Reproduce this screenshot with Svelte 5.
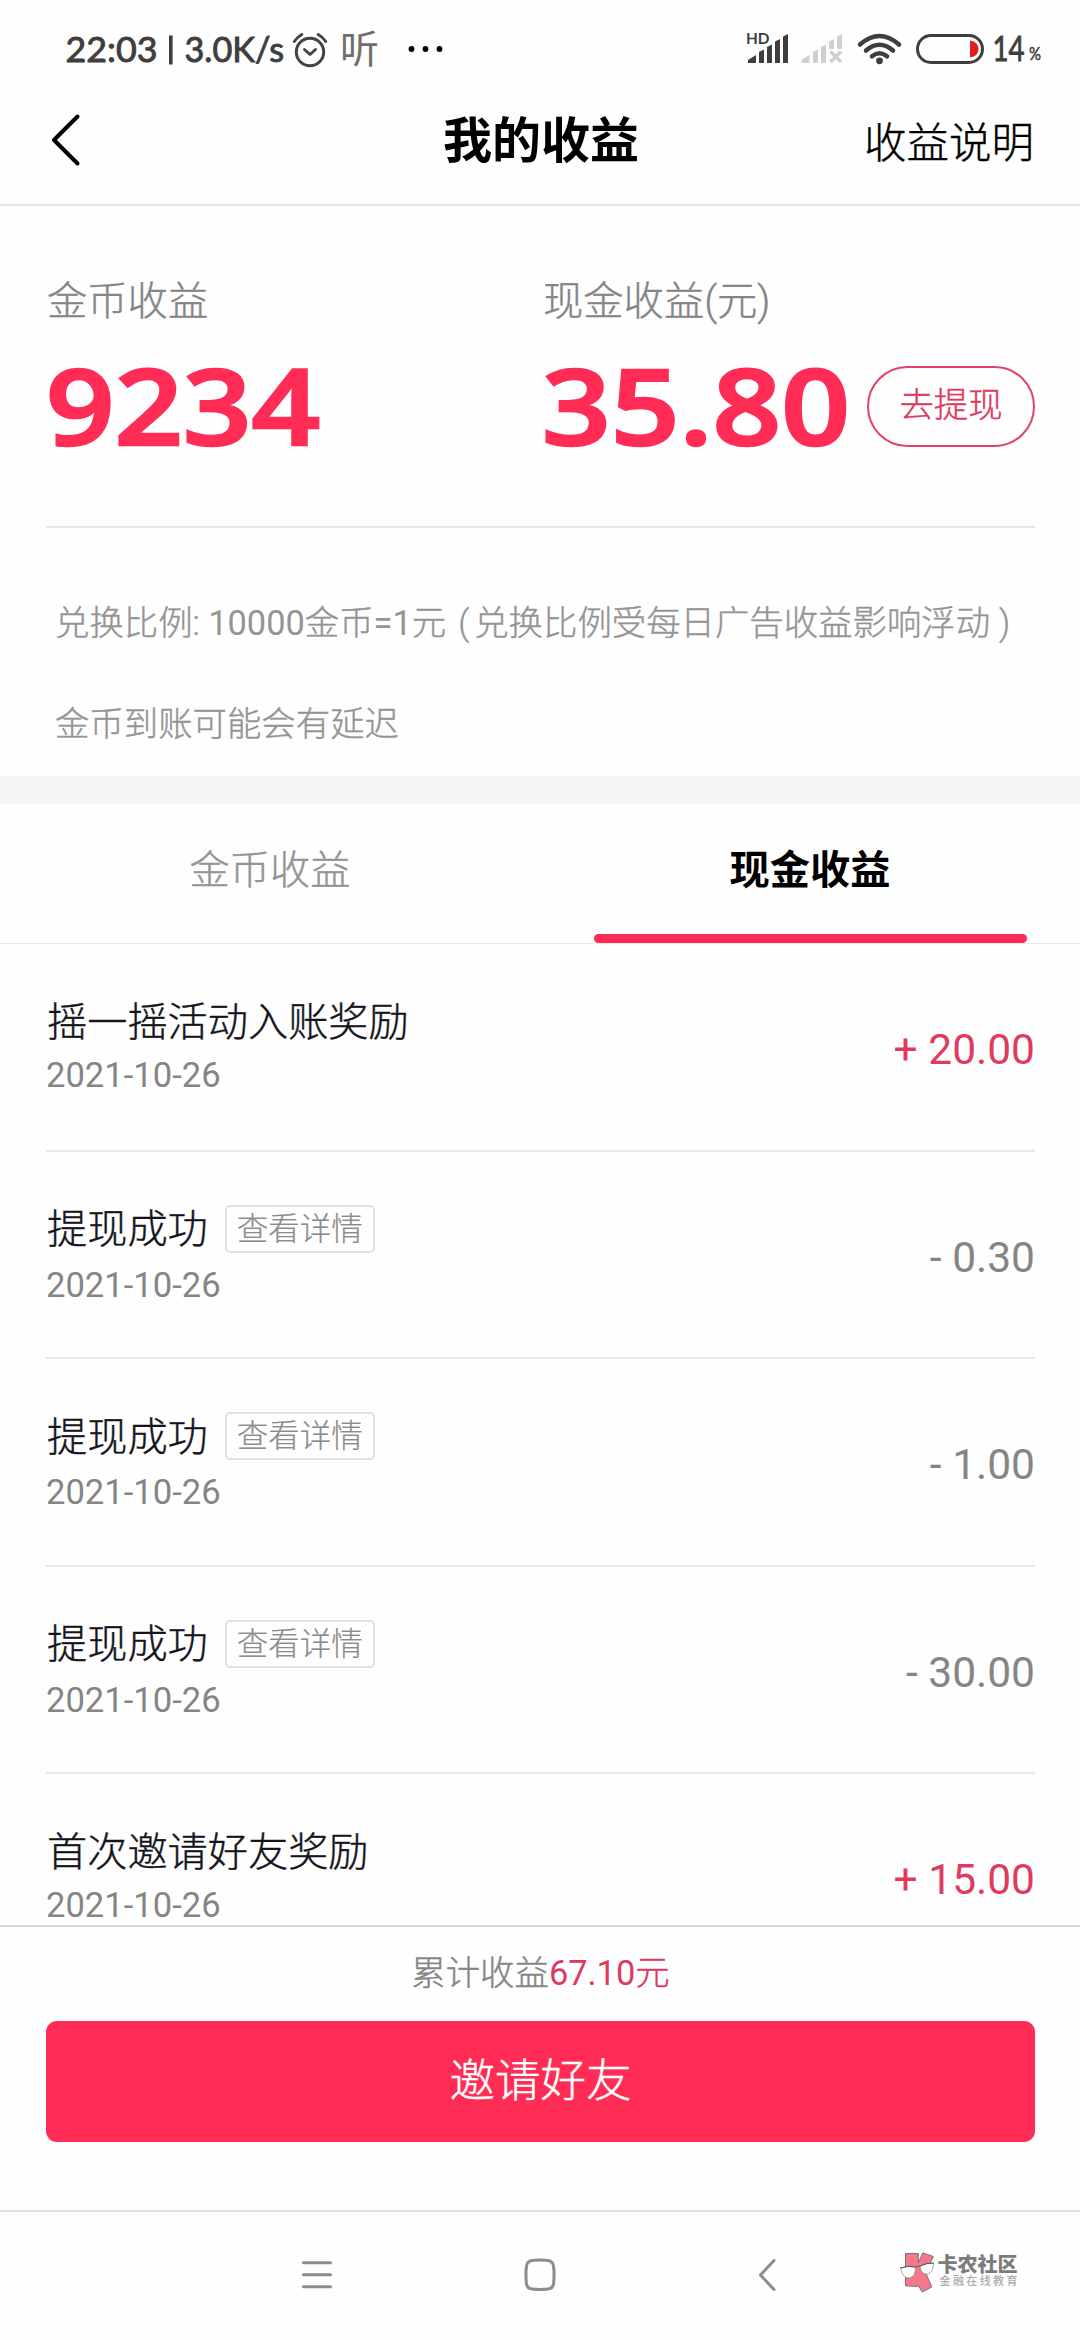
<script>
  const rows = [
    { title: '摇一摇活动入账奖励', date: '2021-10-26', amount: '+ 20.00', income: true },
    { title: '提现成功', date: '2021-10-26', amount: '- 0.30', detail: true },
    { title: '提现成功', date: '2021-10-26', amount: '- 1.00', detail: true },
    { title: '提现成功', date: '2021-10-26', amount: '- 30.00', detail: true },
    { title: '首次邀请好友奖励', date: '2021-10-26', amount: '+ 15.00', income: true },
  ];
</script>

<div class="screen">
  <svg class="status" viewBox="0 0 1080 80" width="1080" height="80">
    <g class="clock">
      <text x="65.5" y="62" textLength="92" lengthAdjust="spacingAndGlyphs">22:03</text>
      <rect x="169" y="35.500" width="3.600" height="29" />
      <text x="184.500" y="62" textLength="99.500" lengthAdjust="spacingAndGlyphs">3.0K/s</text>
    </g>
    <g class="line">
      <circle cx="310" cy="52" r="13.700" />
      <path d="M304.500 49.500l5.500 5 5.500-5M294.300 41.500q3-4.500 7.500-7M325.700 41.500q-3-4.500-7.500-7" />
    </g>
    <text class="listen" x="340" y="63">听</text>
    <circle cx="411.500" cy="49" r="2.900" /><circle cx="425.500" cy="49" r="2.900" /><circle cx="439.500" cy="49" r="2.900" />
    <text class="hd" x="746" y="44" textLength="23.500" lengthAdjust="spacingAndGlyphs">HD</text>
    <path class="dark" d="M748 63v-3l8-5v8zM759 63V52l5-2.500V63zM767 63V47l5-2.500V63zM775 63V41.500l5-2.500V63zM783 63V36.500l5-2.500V63z" />
    <path class="pale" d="M801.500 63v-3l8-5v8zM813 63V52l5-2.500V63zM821 63V47l5-2.500V63zM829 49v-7.500l5-2.500v10zM837 49V36.500l5-2.500v15z" />
    <path class="cross" d="M830.500 51.500l10.500 10.500M841 51.500L830.500 62" />
    <path class="wifi" d="M860 44.500q19.500-17 39 0M866 50.500q13.500-11.500 27 0M872 56.300q7.500-6 15 0" />
    <circle class="dark" cx="879.500" cy="60.800" r="3.400" />
    <rect class="cell" x="917.500" y="35.500" width="65" height="27" rx="13.500" />
    <path class="low" d="M970 40.500q8.500 1.500 8.500 8.500t-8.500 8.500z" />
    <text class="charge" x="992.500" y="61" textLength="32" lengthAdjust="spacingAndGlyphs">14</text>
    <text class="percent" x="1029" y="60.300" textLength="12" lengthAdjust="spacingAndGlyphs">%</text>
  </svg>

  <header>
    <svg class="back" viewBox="0 0 34 56" width="34" height="56"><path d="M29.500 3.500L6 27l23.500 23.500" /></svg>
    <h1>我的收益</h1>
    <span class="explain">收益说明</span>
  </header>

  <section class="summary">
    <div class="balances">
      <div class="coins">
        <div class="label">金币收益</div>
        <svg class="figure" width="280" height="84"><text x="0" y="78.500" textLength="274" lengthAdjust="spacingAndGlyphs">9234</text></svg>
      </div>
      <div>
        <div class="label">现金收益(元)</div>
        <div class="cash">
          <svg class="figure" width="325" height="84"><text x="0" y="78.500" textLength="308" lengthAdjust="spacingAndGlyphs">35.80</text></svg>
          <button class="withdraw">去提现</button>
        </div>
      </div>
    </div>
    <p>兑换比例: <b>10000</b>金币<b>=1</b>元<span class="open">(</span>兑换比例受每日广告收益影响浮动<span class="close">)</span></p>
    <p>金币到账可能会有延迟</p>
  </section>

  <nav class="tabs">
    <div class="tab">金币收益</div>
    <div class="tab active">现金收益</div>
  </nav>

  <main>
    {#each rows as row}
      <article>
        <div>
          <div class="title">{row.title}{#if row.detail}<span class="tag">查看详情</span>{/if}</div>
          <div class="date" class:lower={row.detail}>{row.date}</div>
        </div>
        <div class="amount" class:income={row.income}>{row.amount}</div>
      </article>
    {/each}
  </main>

  <footer>
    <div class="total">累计收益<span><b>67.10</b>元</span></div>
    <button class="invite">邀请好友</button>
  </footer>

  <div class="system">
    <svg viewBox="0 0 1080 128" width="1080" height="128">
      <path class="faint" d="M0 2.500h1080" />
      <g class="keys">
        <path d="M303.500 50.700h27M303.500 62.700h27M303.500 74.700h27M774 48.500L760.500 63 774 77.500" />
        <path d="M532 48.500q8-1 16 0 5 .7 5.600 6 .9 8.500 0 17-.6 5-5.600 5.600-8 1-16 0-5-.6-5.600-5.600-.9-8.500 0-17 .6-5.300 5.600-6z" />
      </g>
      <g class="brand">
        <path class="mark" d="M905.500 41.500h12.800V51l4.500-10.200 10.500 3.700-7.500 16.500 6 14-9.500 5-4.500-7V74l-1 -.5V74.500l-11.300-.7z" />
        <path class="lens" d="M900.800 56.500q7-3.500 14.500-1.500.8 9.500-6 11-7.300 0-8.500-9.500zM920 54q7-3.500 13.500-2.500-.2 9.500-6.500 10.700-6 0-7-8.200z" />
        <path class="frame" d="M900 56q8-3 16-1l4-1q7-3.500 14-3" />
        <text class="name" x="937.500" y="59.500" textLength="80">卡农社区</text>
        <text class="motto" x="939.500" y="73" textLength="78">金融在线教育</text>
      </g>
    </svg>
  </div>
</div>

<style>
  :global(body) { margin: 0; background: #fefefe; }
  .screen {
    width: 1080px; height: 2340px; overflow: hidden; display: flex; flex-direction: column;
    background: #fefefe; color: #14151c;
    font-family: Roboto, "Noto Sans CJK SC", sans-serif; font-weight: 300;
    -webkit-text-stroke: .4px;
  }
  svg { display: block; flex: none; -webkit-text-stroke: 0; }
  button { font: inherit; padding: 0; box-sizing: border-box; }
  b { font-weight: 400; -webkit-text-stroke: 0; }
  .clock, .dark { fill: #3e3e3e; }
  .clock text { font: 400 34px Lato, sans-serif; stroke: #3e3e3e; stroke-width: .9px; }
  .line { fill: none; stroke: #444; stroke-width: 3; stroke-linecap: round; stroke-linejoin: round; }
  .listen { font: 400 39px "Noto Sans CJK SC", sans-serif; fill: #6e6e6e; }
  .hd { font: 700 15.500px Lato, sans-serif; fill: #3e3e3e; }
  .pale { fill: #cfcfcf; }
  .cross { stroke: #cfcfcf; stroke-width: 3.500; }
  .wifi { fill: none; stroke: #3e3e3e; stroke-width: 4.500; stroke-linecap: round; }
  .cell { fill: none; stroke: #3e3e3e; stroke-width: 3; }
  .low { fill: #e01e1e; }
  .charge { font: 400 34px Lato, sans-serif; fill: #3e3e3e; stroke: #3e3e3e; stroke-width: .9px; }
  .percent { font: 400 17px Lato, sans-serif; fill: #3e3e3e; stroke: #3e3e3e; stroke-width: .5px; }

  header {
    height: 124px; border-bottom: 2px solid #e6e6e6; display: grid;
    grid-template-columns: 1fr auto 1fr; align-items: center; padding: 0 46px 0 48px; color: #000;
  }
  .back { fill: none; stroke: #000; stroke-width: 4; stroke-linecap: round; stroke-linejoin: round; margin-bottom: 3px; }
  h1 { margin: 0; font-size: 49px; line-height: 60px; font-weight: 700; -webkit-text-stroke: 0; }
  .explain { justify-self: end; font-size: 42.500px; line-height: 60px; padding-top: 4px; }

  .summary { height: 570px; border-bottom: 28px solid #f4f5f7; }
  .balances {
    height: 322px; box-sizing: border-box; margin: 0 45px 0 46px; border-bottom: 2px solid #e6e6e6;
    display: flex; padding-top: 68px;
  }
  .coins { width: 497px; }
  .label { font-size: 40.300px; line-height: 56px; color: #858585; padding-left: 1px; }
  .figure { margin-top: 36px; overflow: visible; }
  .figure text { font: 600 105px "Open Sans", sans-serif; fill: #ff2c55; stroke: #ff2c55; stroke-width: 2.600px; }
  .cash { display: flex; }
  .withdraw {
    width: 168px; height: 81px; margin-top: 36px; border: 2px solid #df4567; border-radius: 41px;
    background: none; color: #dc3a5f; font-size: 34.400px; padding-bottom: 10px;
  }
  p { margin: 0 0 0 55px; font-size: 34.400px; line-height: 101px; color: #949494; white-space: nowrap; }
  .balances + p { margin-top: 45px; }
  .open { padding: 0 5px 0 12px; }
  .close { padding-left: 9px; }

  .tabs { height: 139px; display: flex; border-bottom: 1px solid #e8e8e8; }
  .tab { width: 540px; text-align: center; font-size: 40.200px; line-height: 134px; color: #949494; }
  .active { position: relative; color: #000; font-weight: 700; -webkit-text-stroke: 0; }
  .active::after {
    content: ""; position: absolute; left: 54px; right: 53px; bottom: 0; height: 9px;
    border-radius: 5px; background: #fb2b55;
  }

  main { height: 981px; overflow: hidden; padding: 0 45px 0 46px; }
  article { height: 205.500px; border-bottom: 2px solid #e8e8e8; display: flex; justify-content: space-between; }
  .title { height: 56px; margin-top: 46px; display: flex; align-items: center; font-size: 40.200px; padding-left: 1px; }
  .tag {
    margin: 6px 0 0 17px; width: 150px; height: 48px; box-sizing: border-box; border: 2px solid #e0e0e0;
    border-radius: 5px; font-size: 31.500px; line-height: 45px; text-align: center; color: #8c8c8c;
    -webkit-text-stroke: .2px;
  }
  .date { font-size: 34.600px; line-height: 48px; margin-top: 5px; color: #858585; font-weight: 400; -webkit-text-stroke: 0; }
  .lower { margin-top: 7px; }
  .amount { font-size: 42.500px; line-height: 60px; margin-top: 76px; color: #858585; font-weight: 400; -webkit-text-stroke: 0; }
  .income { color: #df3b60; }

  footer { height: 285px; border-top: 2px solid #d8d8d8; box-sizing: border-box; padding: 0 45px 0 46px; }
  .total { text-align: center; font-size: 34.400px; line-height: 92px; height: 94px; color: #858585; }
  .total span { color: #dc3a5f; }
  .invite {
    display: block; width: 989px; height: 121px; border: 0; border-radius: 11px;
    background: #ff2c55; color: #fff; font-size: 45.500px; padding-bottom: 9px;
  }
  .system { height: 128px; border-top: 2px solid #dedede; }
  .faint { stroke: #f6f6f6; stroke-width: 1; }
  .keys { fill: none; stroke: #8c8c8c; stroke-width: 3; stroke-linecap: round; stroke-linejoin: round; }
  .mark { fill: #f4788a; stroke: #777; stroke-width: 1; }
  .lens { fill: #fff; stroke: #888; stroke-width: .7; }
  .frame { fill: none; stroke: #555; stroke-width: 1; }
  .name { font: 900 20px "Noto Sans CJK SC", sans-serif; fill: #7c7c7c; }
  .motto { font: 500 11px "Noto Sans CJK SC", sans-serif; fill: #aaa; }
</style>
